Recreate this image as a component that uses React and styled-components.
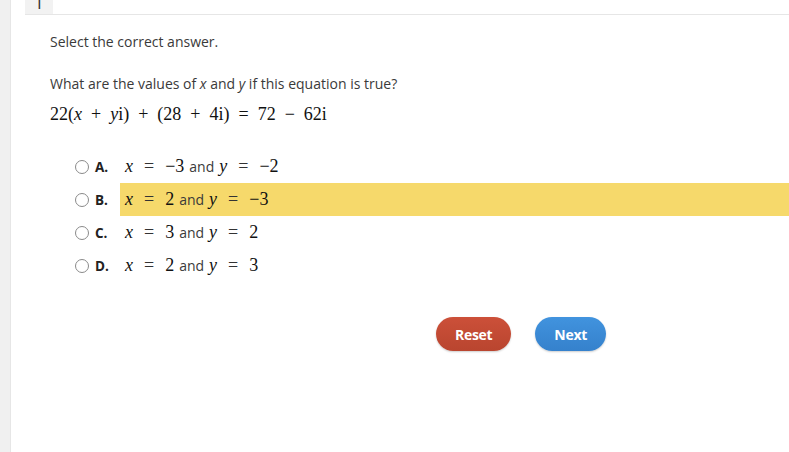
import React from "react";
import styled, { createGlobalStyle } from "styled-components";

const GlobalStyle = createGlobalStyle`
  html, body {
    margin: 0;
    padding: 0;
    background: #ffffff;
  }
  body {
    font-family: "Open Sans", "Liberation Sans", sans-serif;
    color: #333333;
  }
`;

const options = [
  { key: "A", x: "−3", y: "−2" },
  { key: "B", x: "2", y: "−3", picked: true },
  { key: "C", x: "3", y: "2" },
  { key: "D", x: "2", y: "3" },
];

const App = () => {
  return (
    <>
      <GlobalStyle />
      <Page>
        <SideStrip />
        <Main>
          <TabBar>
            <Tab>
              <TabNumber>1</TabNumber>
            </Tab>
          </TabBar>
          <Content>
            <Prompt>Select the correct answer.</Prompt>
            <Question>
              What are the values of <Var>x</Var> and <Var>y</Var> if this
              equation is true?
            </Question>
            <Equation>
              22(<MathVar>x</MathVar>
              <Op>+</Op>
              <MathVar>y</MathVar>i)
              <Op>+</Op>
              (28
              <Op>+</Op>
              4i)
              <Op>=</Op>
              72
              <Op>−</Op>
              62i
            </Equation>
            <OptionList>
              {options.map((o) => (
                <OptionRow key={o.key}>
                  <Radio />
                  <Letter>{o.key}.</Letter>
                  <Answer $picked={o.picked}>
                    <MathVar>x</MathVar>
                    <Op $wide>=</Op>
                    <Num>{o.x}</Num>
                    <Word>and</Word>
                    <MathVar>y</MathVar>
                    <Op $wide>=</Op>
                    <Num>{o.y}</Num>
                  </Answer>
                </OptionRow>
              ))}
            </OptionList>
            <Buttons>
              <Button $color="#cc5039" $dark="#b9452f">
                Reset
              </Button>
              <Button $color="#4193de" $dark="#3581cc">
                Next
              </Button>
            </Buttons>
          </Content>
        </Main>
      </Page>
    </>
  );
};

const Page = styled.div`
  display: flex;
  width: 789px;
  height: 452px;
  overflow: hidden;
`;

const SideStrip = styled.div`
  width: 10px;
  flex-shrink: 0;
  background: #f0f0f0;
  border-right: 1px solid #e6e6e6;
`;

const Main = styled.div`
  flex: 1;
  padding-left: 14px;
  display: flex;
  flex-direction: column;
`;

const TabBar = styled.div`
  height: 14px;
  border-bottom: 1px solid #e6e6e6;
  display: flex;
`;

const Tab = styled.div`
  width: 28px;
  height: 14px;
  background: #f2f2f2;
  overflow: hidden;
  display: flex;
  justify-content: center;
`;

const TabNumber = styled.span`
  display: block;
  margin-top: -9px;
  font-size: 18px;
  line-height: 22px;
  color: #333;
`;

const Content = styled.div`
  padding: 17px 0 0 25px;
  display: flex;
  flex-direction: column;
`;

const Prompt = styled.p`
  margin: 0;
  font-size: 14px;
  line-height: 20px;
  color: #3a3a3a;
`;

const Question = styled.p`
  margin: 22px 0 0;
  font-size: 14px;
  line-height: 20px;
  color: #3a3a3a;
`;

const Var = styled.i`
  font-style: italic;
`;

const Equation = styled.div`
  margin-top: 8px;
  font-family: "Liberation Serif", "DejaVu Serif", serif;
  font-size: 18px;
  line-height: 24px;
  color: #111;
  white-space: nowrap;
`;

const MathVar = styled.span`
  font-family: "Liberation Serif", "DejaVu Serif", serif;
  font-style: italic;
  font-size: 18px;
  color: #111;
`;

const Op = styled.span`
  font-family: "Liberation Serif", "DejaVu Serif", serif;
  font-size: 18px;
  margin: 0 ${(p) => (p.$wide ? "11px" : "9px")};
`;

const Num = styled.span`
  font-family: "Liberation Serif", "DejaVu Serif", serif;
  font-size: 18px;
  color: #111;
`;

const Word = styled.span`
  font-size: 14px;
  color: #3a3a3a;
  margin: 0 5px 0 5px;
`;

const OptionList = styled.div`
  margin-top: 24px;
  display: flex;
  flex-direction: column;
`;

const OptionRow = styled.div`
  display: flex;
  align-items: center;
  height: 33px;
  padding-left: 25px;
`;

const Radio = styled.span`
  width: 12px;
  height: 12px;
  border-radius: 50%;
  border: 1px solid #8a8a8a;
  background: #fff;
  flex-shrink: 0;
`;

const Letter = styled.span`
  font-size: 13.5px;
  font-weight: 700;
  color: #222;
  margin-left: 6px;
  width: 25px;
`;

const Answer = styled.div`
  flex: 1;
  height: 33px;
  display: flex;
  align-items: center;
  padding-left: 5px;
  background: ${(p) => (p.$picked ? "#f6d96b" : "transparent")};
  white-space: nowrap;
`;

const Buttons = styled.div`
  display: flex;
  gap: 24px;
  margin-top: 35px;
  padding-left: 386px;
`;

const Button = styled.button`
  height: 34px;
  padding: 0 19px;
  border: none;
  border-radius: 17px;
  background: linear-gradient(${(p) => p.$color}, ${(p) => p.$dark});
  color: #fff;
  font-family: "Open Sans", "Liberation Sans", sans-serif;
  font-size: 14px;
  font-weight: 700;
  letter-spacing: -0.3px;
  box-shadow: 0 1px 2px rgba(0, 0, 0, 0.2);
`;

export default App;
